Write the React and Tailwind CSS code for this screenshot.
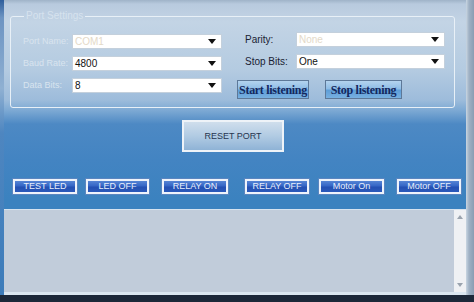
const F = { fontFamily: '"Liberation Sans", Arial, sans-serif' };

function Arrow() {
  return (
    <svg width="8" height="5" viewBox="0 0 8 5" className="shrink-0">
      <path d="M0 0 H8 L4 5 Z" fill="#111" />
    </svg>
  );
}

function Combo({ value, w, faded }) {
  return (
    <div
      className={`h-[15px] ${w} bg-white border border-[#c4d0dc] flex items-center pl-[2px] pr-[5px] justify-between`}
    >
      <span className={`text-[10px] leading-none ${faded ? "text-[#e3d9c8]" : "text-[#111]"}`}>{value}</span>
      <Arrow />
    </div>
  );
}

function BlueBtn({ label, w, ml }) {
  return (
    <div
      className={`${w} ${ml} h-[15px] border-2 border-[#eef3fb] outline outline-1 outline-[#5a86c0] bg-[linear-gradient(to_bottom,#5584d4_0%,#3566c6_45%,#2450b2_55%,#2a59ba_100%)] flex items-center justify-center`}
    >
      <span className="text-[9px] leading-none text-[#e8effb]">{label}</span>
    </div>
  );
}

export default function App() {
  return (
    <div className="w-[474px] h-[302px] overflow-hidden flex flex-col bg-[#1c2839]" style={F}>
      <div className="flex h-[295px]">
        <div className="w-[4px] bg-[linear-gradient(to_bottom,#2f5f9c_0%,#6d94c2_6%,#8fb0d2_30%,#4e86c0_45%,#3d7cba_100%)]" />
        <div className="w-[462px] flex flex-col bg-[linear-gradient(to_bottom,#9fb3c8_0px,#b8cade_4px,#c3d4e5_22px,#b4cbe1_70px,#9dbcdb_100px,#7eaad4_110px,#4d89c4_124px,#4384c2_160px,#3b82bf_200px,#3b82bf_295px)]">
          <fieldset className="ml-[6px] mt-[10px] w-[445px] h-[98px] border border-[#e8f0f7] rounded-[3px] pl-[9px] m-0">
            <legend className="ml-[4px] px-[2px] text-[10px] leading-[12px] text-[#d6e2ee]">Port Settings</legend>
            <div className="flex">
              <div className="flex flex-col gap-[7px] pt-[12px]">
                {[
                  ["Port Name:", "COM1", true],
                  ["Baud Rate:", "4800", false],
                  ["Data Bits:", "8", false],
                ].map(([l, v, f]) => (
                  <div key={l} className="flex items-center h-[15px]">
                    <span className="w-[52px] whitespace-nowrap text-[9px] leading-none text-[#d9e4ef] pl-[3px]">{l}</span>
                    <Combo value={v} w="w-[150px]" faded={f} />
                  </div>
                ))}
              </div>
              <div className="flex flex-col ml-[15px] pt-[10px]">
                <div className="flex flex-col gap-[7px]">
                  {[
                    ["Parity:", "None", true],
                    ["Stop Bits:", "One", false],
                  ].map(([l, v, f]) => (
                    <div key={l} className="flex items-center h-[15px]">
                      <span className="ml-[8px] w-[51px] whitespace-nowrap text-[10px] leading-none text-[#1a2233]">{l}</span>
                      <Combo value={v} w="w-[149px]" faded={f} />
                    </div>
                  ))}
                </div>
                <div className="flex mt-[11px] gap-[16px]">
                  {[
                    ["Start listening", "w-[72px]"],
                    ["Stop listening", "w-[77px]"],
                  ].map(([l, w]) => (
                    <div
                      key={l}
                      className={`${w} h-[19px] border border-[#5d7898] bg-[linear-gradient(to_bottom,#b4d3ee_0%,#8fbde6_45%,#5e9ed8_55%,#78b0e0_100%)] flex items-center justify-center`}
                    >
                      <span
                        className="text-[12px] font-bold leading-none text-[#14285e] whitespace-nowrap tracking-[-0.3px]"
                        style={{ fontFamily: '"Liberation Serif", "Times New Roman", serif' }}
                      >
                        {l}
                      </span>
                    </div>
                  ))}
                </div>
              </div>
            </div>
          </fieldset>

          <div className="mt-[12px] ml-[178px] w-[102px] h-[32px] border-2 border-[#eef3f8] bg-[linear-gradient(to_bottom,#cfdeec_0%,#b1cbe3_50%,#8fb3d6_100%)] flex items-center justify-center">
            <span className="text-[9px] leading-none text-[#263650]">RESET PORT</span>
          </div>

          <div className="mt-[27px] h-[15px] flex">
            <BlueBtn label="TEST LED" w="w-[64px]" ml="ml-[9px]" />
            <BlueBtn label="LED OFF" w="w-[63px]" ml="ml-[9px]" />
            <BlueBtn label="RELAY ON" w="w-[66px]" ml="ml-[13px]" />
            <BlueBtn label="RELAY OFF" w="w-[64px]" ml="ml-[17px]" />
            <BlueBtn label="Motor On" w="w-[65px]" ml="ml-[10px]" />
            <BlueBtn label="Motor OFF" w="w-[64px]" ml="ml-[13px]" />
          </div>

          <div className="mt-[15px] h-[83px] flex border-t border-[#d6e3ef] bg-[#c1ccda]">
            <div className="flex-1" />
            <div className="w-[12px] bg-[#eff1f4] flex flex-col items-center justify-between py-[5px]">
              <svg width="6" height="4" viewBox="0 0 6 4"><path d="M0 4 L3 0 L6 4 Z" fill="#9aa3ae" /></svg>
              <svg width="6" height="4" viewBox="0 0 6 4"><path d="M0 0 L3 4 L6 0 Z" fill="#9aa3ae" /></svg>
            </div>
          </div>
          <div className="h-[3px] bg-[#dbe7f1]" />
        </div>
        <div className="w-[8px] bg-[linear-gradient(to_right,#c9d6e2_0px,#9fb1c4_3px,#8a9db3_8px)]" />
      </div>
      <div className="h-[7px] bg-[#1c2839]" />
    </div>
  );
}
